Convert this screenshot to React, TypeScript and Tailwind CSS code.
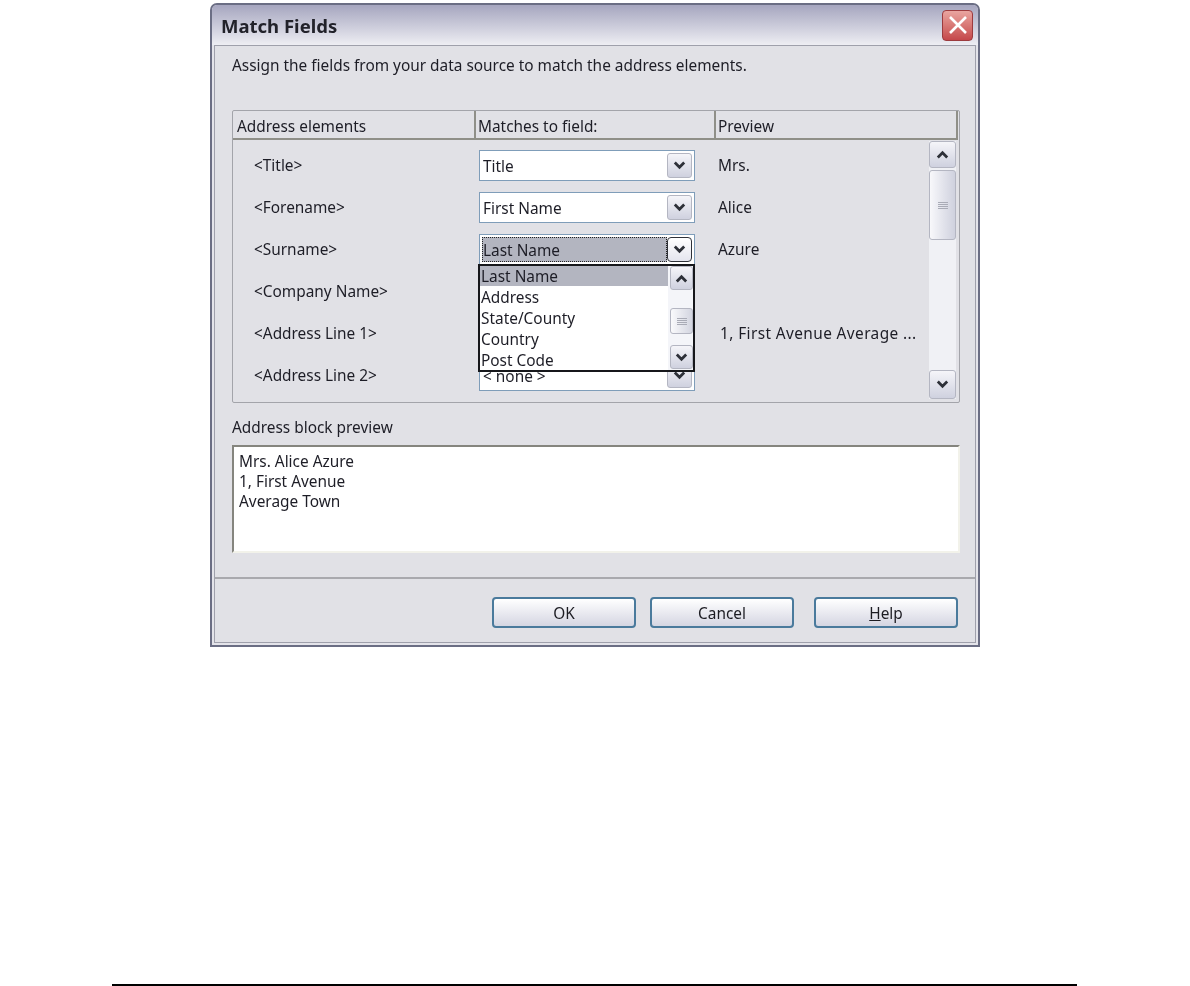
import React from 'react';

const rows = [
    { label: '<Title>', value: 'Title', preview: 'Mrs.' },
    { label: '<Forename>', value: 'First Name', preview: 'Alice' },
    { label: '<Surname>', value: 'Last Name', preview: 'Azure', focused: true },
    { label: '<Company Name>', value: '', preview: '' },
    { label: '<Address Line 1>', value: '', preview: '1, First Avenue Average ...', long: true },
    { label: '<Address Line 2>', value: '< none >', preview: '' },
];

const Chevron: React.FC<{ up?: boolean }> = ({ up }) => (
    <svg width="13" height="9" viewBox="0 0 13 9" className={up ? 'rotate-180' : ''}>
        <path d="M1.8 1.6 L6.5 6.2 L11.2 1.6" fill="none" stroke="#2d3038" strokeWidth="2.8" />
    </svg>
);

const ScrollButton: React.FC<{ up?: boolean; className?: string }> = ({ up, className }) => (
    <div className={`flex items-center justify-center rounded-[3px] border border-[#b4b6c2] bg-gradient-to-b from-[#f5f5f9] to-[#cfd1df] ${className ?? ''}`}>
        <Chevron up={up} />
    </div>
);

const Grip: React.FC = () => (
    <div className="flex flex-col gap-[1px]">
        <div className="h-[1px] w-[10px] bg-[#a9abb6]" />
        <div className="h-[1px] w-[10px] bg-[#a9abb6]" />
        <div className="h-[1px] w-[10px] bg-[#a9abb6]" />
        <div className="h-[1px] w-[10px] bg-[#a9abb6]" />
    </div>
);

const Combo: React.FC<{ value: string; focused?: boolean }> = ({ value, focused }) => (
    <div className="flex h-[31px] w-[216px] items-center border border-[#7f9db9] bg-white p-[2px]">
        {focused ? (
            <div className="flex h-full flex-1 items-center border border-dotted border-[#222] bg-[#b3b5c0] pt-[2px]">
                {value}
            </div>
        ) : (
            <div className="flex h-full flex-1 items-center pl-[1px] pt-[2px]">{value}</div>
        )}
        {focused ? (
            <div className="flex h-[25px] w-[25px] items-center justify-center rounded-[4px] border border-[#2f3138] bg-gradient-to-b from-white to-[#e4e5ee]">
                <Chevron />
            </div>
        ) : (
            <ScrollButton className="ml-[1px] h-[25px] w-[25px]" />
        )}
    </div>
);

const Dropdown: React.FC = () => (
    <div className="absolute left-[245px] top-[153px] z-10 flex h-[108px] w-[217px] border-2 border-[#16171b] bg-white leading-[21px]">
        <div className="flex-1">
            <div className="h-[20px] bg-[#b3b5c0] pl-[1px] leading-[22px]">Last Name</div>
            <div className="pt-px">
                <div className="pl-[1px]">Address</div>
                <div className="pl-[1px]">State/County</div>
                <div className="pl-[1px]">Country</div>
                <div className="pl-[1px]">Post Code</div>
            </div>
        </div>
        <div className="flex w-[25px] flex-col items-end bg-[#f4f5f9]">
            <ScrollButton up className="h-[24px] w-[23px]" />
            <div className="mt-[18px] flex h-[26px] w-[23px] items-center justify-center rounded-[3px] border border-[#b4b6c2] bg-gradient-to-r from-[#fafafc] to-[#d3d5e0]">
                <Grip />
            </div>
            <ScrollButton className="mt-[11px] h-[24px] w-[23px]" />
        </div>
    </div>
);

const DialogButton: React.FC<{ className?: string; children: React.ReactNode }> = ({ className, children }) => (
    <button className={`h-[31px] w-[144px] rounded-[4px] border-2 border-[#4a7a9c] bg-gradient-to-b from-white to-[#d5d6e2] pt-[2px] text-[#1c1c22] ${className ?? ''}`}>
        {children}
    </button>
);

const App: React.FC = () => {
    return (
        <div className="flex h-[986px] flex-col bg-white text-[15.4px] text-[#1d1d26]" style={{ fontFamily: '"Noto Sans", sans-serif' }}>
            {/* Dialog window */}
            <div className="ml-[210px] mt-[3px] flex h-[644px] w-[770px] flex-col rounded-t-[7px] border-2 border-[#6b6e84] bg-[#e4e4ea] blur-[0.4px]">
                <div className="flex h-[40px] shrink-0 items-center justify-between rounded-t-[5px] bg-gradient-to-b from-[#a6a6bf] to-[#eeeef3] pr-[5px]">
                    <span className="pl-[9px] pt-[3px] text-[18.5px] font-bold leading-none text-[#22222a]">Match Fields</span>
                    <div className="flex h-[31px] w-[31px] items-center justify-center rounded-[4px] border border-[#9c3b3e] bg-gradient-to-b from-[#e9a5a0] to-[#c4474b]">
                        <svg width="22" height="20" viewBox="0 0 22 20">
                            <path d="M3 2 L19 18 M19 2 L3 18" stroke="#fff" strokeWidth="2.6" />
                        </svg>
                    </div>
                </div>

                <div className="mx-[2px] mb-[2px] flex flex-1 flex-col border border-[#9fa0ab] bg-[#e1e1e6]">
                    <div className="px-[17px] pt-[8px]">
                        <div className="h-[56px]">Assign the fields from your data source to match the address elements.</div>

                        {/* Field mapping panel */}
                        <div className="relative h-[293px] w-[728px] rounded-[2px] border border-[#a3a4aa]">
                            <div className="mr-[1px] flex h-[29px] border-b-2 border-[#8f8f88] leading-[31px]">
                                <div className="h-[27px] w-[243px] border-r-2 border-[#8f8f88] pl-[4px]">Address elements</div>
                                <div className="h-[27px] w-[240px] border-r-2 border-[#8f8f88] pl-[2px]">Matches to field:</div>
                                <div className="h-[27px] flex-1 border-r-2 border-[#8f8f88] pl-[2px]">Preview</div>
                            </div>
                            <div className="flex">
                                <div className="flex flex-1 flex-col gap-[11px] pt-[10px]">
                                    {rows.map(row => (
                                        <div key={row.label} className="flex h-[31px] items-center">
                                            <span className="w-[246px] shrink-0 pl-[21px]">{row.label}</span>
                                            <Combo value={row.value} focused={row.focused} />
                                            {row.long ? (
                                                <span className="whitespace-nowrap pl-[25px] tracking-[0.4px]">{row.preview}</span>
                                            ) : (
                                                <span className="whitespace-nowrap pl-[23px]">{row.preview}</span>
                                            )}
                                        </div>
                                    ))}
                                </div>
                                <div className="mr-[3px] mt-px flex h-[258px] w-[27px] flex-col bg-[#f0f1f5]">
                                    <ScrollButton up className="h-[27px] w-[27px]" />
                                    <div className="mt-[2px] flex h-[70px] w-[27px] items-center justify-center rounded-[3px] border border-[#b4b6c2] bg-gradient-to-r from-[#f8f8fb] to-[#cfd1de]">
                                        <Grip />
                                    </div>
                                    <div className="flex-1" />
                                    <ScrollButton className="h-[29px] w-[27px]" />
                                </div>
                            </div>
                            <Dropdown />
                        </div>

                        <div className="pt-[13px]">Address block preview</div>
                        <div className="mt-[6px] h-[108px] w-[728px] border-2 border-b-[#f2f2ea] border-l-[#85857e] border-r-[#f2f2ea] border-t-[#85857e] bg-white pl-[5px] pt-[5px] leading-[20px]">
                            <div>Mrs. Alice Azure</div>
                            <div>1, First Avenue</div>
                            <div>Average Town</div>
                        </div>
                    </div>

                    <div className="mt-[24px] border-t-2 border-[#a9a9ae]" />
                    <div className="flex flex-1 items-start justify-end pr-[17px] pt-[18px]">
                        <DialogButton>OK</DialogButton>
                        <DialogButton className="ml-[14px]">Cancel</DialogButton>
                        <DialogButton className="ml-[20px]"><span className="underline">H</span>elp</DialogButton>
                    </div>
                </div>
            </div>

            {/* Page footer rule */}
            <div className="mx-[112px] mt-auto h-[2px] w-[965px] bg-black" />
        </div>
    );
};

export default App;
